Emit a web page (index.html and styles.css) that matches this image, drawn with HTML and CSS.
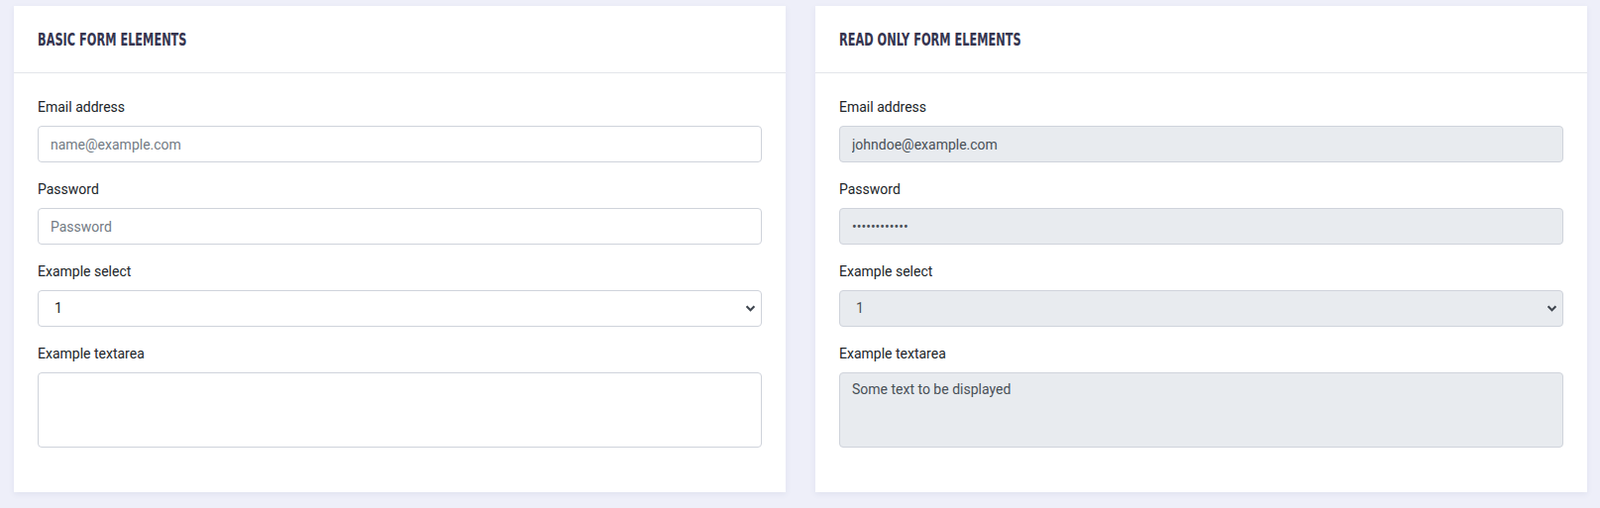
FILE: index.html
```html
<!DOCTYPE html>
<html lang="en">
<head>
<meta charset="utf-8">
<title>Form elements</title>
<link rel="stylesheet" href="styles.css">
</head>
<body>
<main class="page">
  <section class="card">
    <header class="card-header"><h2 class="card-title">Basic Form Elements</h2></header>
    <div class="card-body">
      <div class="form-group">
        <label class="form-label" for="email1">Email address</label>
        <input class="form-control" id="email1" type="email" placeholder="name@example.com">
      </div>
      <div class="form-group">
        <label class="form-label" for="pass1">Password</label>
        <input class="form-control" id="pass1" type="password" placeholder="Password">
      </div>
      <div class="form-group">
        <label class="form-label" for="sel1">Example select</label>
        <select class="form-control form-select" id="sel1"><option>1</option><option>2</option><option>3</option></select>
      </div>
      <div class="form-group">
        <label class="form-label" for="ta1">Example textarea</label>
        <textarea class="form-control form-textarea" id="ta1"></textarea>
      </div>
    </div>
  </section>
  <section class="card">
    <header class="card-header"><h2 class="card-title">Read Only Form Elements</h2></header>
    <div class="card-body">
      <div class="form-group">
        <label class="form-label" for="email2">Email address</label>
        <input class="form-control" id="email2" type="email" value="johndoe@example.com" readonly>
      </div>
      <div class="form-group">
        <label class="form-label" for="pass2">Password</label>
        <input class="form-control" id="pass2" type="password" value="password1234" readonly>
      </div>
      <div class="form-group">
        <label class="form-label" for="sel2">Example select</label>
        <select class="form-control form-select is-readonly" id="sel2"><option>1</option></select>
      </div>
      <div class="form-group">
        <label class="form-label" for="ta2">Example textarea</label>
        <textarea class="form-control form-textarea" id="ta2" readonly>Some text to be displayed</textarea>
      </div>
    </div>
  </section>
</main>
</body>
</html>
```

FILE: styles.css
```css
* { box-sizing: border-box; }
html, body { margin: 0; padding: 0; }
body {
  background: #eeeff9;
  font-family: Roboto, "Liberation Sans", sans-serif;
  color: #212529;
}
.page {
  display: flex;
  gap: 30px;
  padding: 6px 13px 15px 14px;
  align-items: flex-start;
}
.card {
  flex: 1 1 0;
  min-width: 0;
  background: #fff;
  box-shadow: 0 2px 6px rgba(70, 72, 130, 0.08);
}
.card-header {
  height: 68px;
  border-bottom: 1px solid #e3e5ea;
  display: flex;
  align-items: center;
  padding: 0 24px;
}
.card-title {
  margin: 0;
  display: inline-block;
  font-family: "DejaVu Sans Condensed", "Liberation Sans", sans-serif;
  font-stretch: condensed;
  font-weight: 700;
  font-size: 17.5px;
  text-transform: uppercase;
  color: #35344f;
  transform: scaleX(0.72);
  transform-origin: left center;
  white-space: nowrap;
}
.card-body {
  padding: 24px 24px 28px;
}
.form-group {
  margin-bottom: 17px;
}
.form-label {
  display: block;
  font-size: 14px;
  line-height: 21px;
  margin-bottom: 8px;
  color: #212529;
}
.form-control {
  display: block;
  width: 100%;
  height: 37px;
  padding: 6px 12px;
  font-family: Roboto, "Liberation Sans", sans-serif;
  font-size: 14px;
  line-height: 21px;
  color: #495057;
  background: #fff;
  border: 1px solid #cfd3db;
  border-radius: 4px;
  outline: none;
}
.form-control::placeholder { color: #737b84; opacity: 1; }
.form-control[readonly], .form-control.is-readonly {
  background-color: #e8ebef;
}
.form-select {
  appearance: none;
  -webkit-appearance: none;
  padding-left: 16px;
  color: #212529;
  background-image: url("data:image/svg+xml,%3Csvg xmlns='http://www.w3.org/2000/svg' viewBox='0 0 12 8'%3E%3Cpath d='M1.5 1.5 6 6l4.5-4.5' fill='none' stroke='%23404750' stroke-width='2.4'/%3E%3C/svg%3E");
  background-repeat: no-repeat;
  background-position: right 5px center;
  background-size: 11px 7px;
}
.form-select.is-readonly { color: #495057; }
.form-textarea {
  height: 76px;
  padding-top: 6px;
  resize: none;
}
```
